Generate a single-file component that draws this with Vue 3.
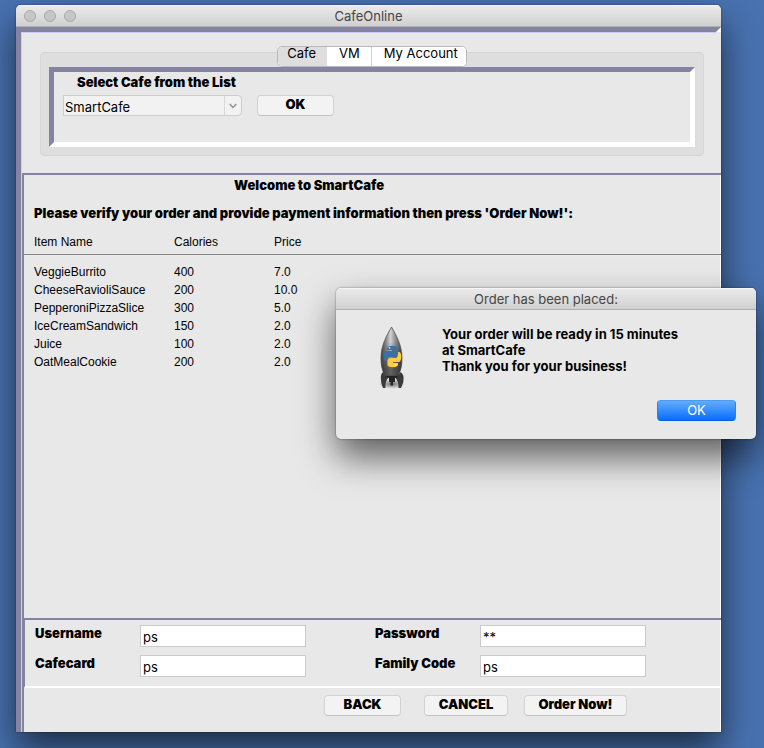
<script setup>
import { ref } from 'vue'

const cafe = ref('SmartCafe')
const tabs = ['Cafe', 'VM', 'My Account']
const activeTab = ref('Cafe')

const items = [
  { name: 'VeggieBurrito', calories: '400', price: '7.0' },
  { name: 'CheeseRavioliSauce', calories: '200', price: '10.0' },
  { name: 'PepperoniPizzaSlice', calories: '300', price: '5.0' },
  { name: 'IceCreamSandwich', calories: '150', price: '2.0' },
  { name: 'Juice', calories: '100', price: '2.0' },
  { name: 'OatMealCookie', calories: '200', price: '2.0' }
]

const fields = ref([
  { id: 'username', label: 'Username', value: 'ps' },
  { id: 'password', label: 'Password', value: '**' },
  { id: 'cafecard', label: 'Cafecard', value: 'ps' },
  { id: 'family', label: 'Family Code', value: 'ps' }
])
</script>

<template>
  <div class="desktop">
    <main class="window">
      <header class="titlebar">
        <div class="lights"><i></i><i></i><i></i></div>
        <span>CafeOnline</span>
      </header>

      <div class="frame">
        <div class="content">
          <section class="chooser">
            <nav class="tabs">
              <button
                v-for="tab in tabs"
                :key="tab"
                type="button"
                class="tab"
                :class="{ active: tab === activeTab }"
                @click="activeTab = tab"
              >{{ tab }}</button>
            </nav>
            <div class="group">
              <div class="sunken">
                <label class="strong list-label" for="cafe">Select Cafe from the List</label>
                <div class="pick">
                  <div class="combo">
                    <select id="cafe" v-model="cafe">
                      <option>SmartCafe</option>
                    </select>
                    <svg class="chevron" viewBox="0 0 17 19" width="17" height="19" aria-hidden="true">
                      <path d="M5 8 L8.5 11.5 L12 8" fill="none" stroke="#8e8e8e" stroke-width="1.5" />
                    </svg>
                  </div>
                  <button type="button" class="btn ok">OK</button>
                </div>
              </div>
            </div>
          </section>

          <div class="lower">
            <section class="order">
              <h1 class="strong">Welcome to SmartCafe</h1>
              <p class="strong">Please verify your order and provide payment information then press 'Order Now!':</p>
              <table>
                <thead>
                  <tr><th class="name">Item Name</th><th class="cal">Calories</th><th>Price</th></tr>
                </thead>
                <tbody>
                  <tr v-for="item in items" :key="item.name">
                    <td>{{ item.name }}</td>
                    <td>{{ item.calories }}</td>
                    <td>{{ item.price }}</td>
                  </tr>
                </tbody>
              </table>
            </section>

            <form class="payment" @submit.prevent>
              <div v-for="f in fields" :key="f.id" class="field">
                <label class="strong" :for="f.id">{{ f.label }}</label>
                <input :id="f.id" v-model="f.value" type="text" autocomplete="off" />
              </div>
            </form>

            <footer class="actions">
              <button type="button" class="btn back">BACK</button>
              <button type="button" class="btn cancel">CANCEL</button>
              <button type="button" class="btn order-now">Order Now!</button>
            </footer>
          </div>
        </div>
      </div>
    </main>

    <div class="dialog" role="dialog" aria-labelledby="dialog-title">
      <header id="dialog-title" class="titlebar">Order has been placed:</header>
      <div class="dialog-body">
        <svg class="rocket" viewBox="0 0 28 64" width="28" height="64" aria-hidden="true">
          <defs>
            <linearGradient id="hull" x1="0" x2="1" y1="0" y2="0">
              <stop offset="0" stop-color="#4c4c4c" />
              <stop offset="0.22" stop-color="#858585" />
              <stop offset="0.45" stop-color="#d2d2d2" />
              <stop offset="0.7" stop-color="#8a8a8a" />
              <stop offset="1" stop-color="#484848" />
            </linearGradient>
            <linearGradient id="shade" x1="0" x2="0" y1="0" y2="1">
              <stop offset="0.3" stop-color="#333" stop-opacity="0" />
              <stop offset="0.85" stop-color="#333" stop-opacity="0.7" />
            </linearGradient>
            <radialGradient id="ground">
              <stop offset="0" stop-color="#555" stop-opacity="0.9" />
              <stop offset="1" stop-color="#777" stop-opacity="0" />
            </radialGradient>
          </defs>
          <ellipse cx="14" cy="57" rx="13" ry="5" fill="url(#ground)" />
          <path d="M13.500 0 C9 8 3 18 3 31 C3 38 4 43 7 49 H20 C23 43 24 38 24 31 C24 18 18 8 13.500 0Z" fill="url(#hull)" stroke="#555" stroke-width="0.800" />
          <path d="M13.500 0 C9 8 3 18 3 31 C3 38 4 43 7 49 H20 C23 43 24 38 24 31 C24 18 18 8 13.500 0Z" fill="url(#shade)" />
          <path d="M5 45 C3 47 2.500 49 3 53 C3 56 4 58 5 61 H7.500 C7.500 56 8 53 11 50 L7 48.500Z" fill="#3a3a3a" />
          <path d="M22.500 45 C25 47 26 49 25.500 53 C25.500 56 24 58 23 61 H20.500 C20.500 56 19.500 53 16.500 50 L20 48.500Z" fill="#3a3a3a" />
          <path d="M7 49 H20.500 L17 51 V55 H15 V58.500 H12.500 V55 H11 V51Z" fill="#232323" />
          <path d="M9 23 V21.500 C9 18 18 18 19 21 V27 C19 29 17.500 30 16 30 H11.500 C9 30 8.500 31 8.500 34 H7.500 C4.500 33 4.500 24 7.500 24 H14 V23Z" fill="#3a70a6" />
          <circle cx="11.500" cy="20.800" r="0.900" fill="#e9f0f7" />
          <path d="M20 25 H21.500 C24 26 24 34.500 21 35 H15 V36 H20 V38 C19 41 10.500 41 9.500 38 V34 C9.500 32 11 31 13 31 H17 C19.500 31 20 29 20 25Z" fill="#fbcf3b" />
          <circle cx="17.500" cy="38" r="0.900" fill="#fff8dc" />
        </svg>
        <p>Your order will be ready in 15 minutes<br />at SmartCafe<br />Thank you for your business!</p>
      </div>
      <div class="dialog-actions">
        <button type="button" class="primary">OK</button>
      </div>
    </div>
  </div>
</template>

<style>
body {
  margin: 0;
}
</style>

<style scoped>
* {
  box-sizing: border-box;
}

.desktop {
  position: relative;
  display: flex;
  min-height: 100vh;
  padding: 5px 43px 16px 16px;
  overflow: hidden;
  background: #4872b0;
  color: #000;
  font: 13px/16px Inter, "Liberation Sans", sans-serif;
}

button,
input,
select {
  font: inherit;
  color: inherit;
  margin: 0;
}

.strong {
  font: 900 13px/16px Inter, "Liberation Sans", sans-serif;
}

.window {
  flex: 1;
  display: flex;
  flex-direction: column;
  min-width: 0;
  overflow: hidden;
  border-radius: 5px 5px 0 0;
  background: #e8e8e8;
  box-shadow: 0 0 2px rgba(0, 0, 0, 0.5), 0 18px 36px rgba(0, 0, 0, 0.6);
}

.titlebar {
  position: relative;
  display: flex;
  align-items: center;
  justify-content: center;
  height: 22px;
  border-bottom: 1px solid #aeaeae;
  background: linear-gradient(#ebebeb, #d0d0d0);
  box-shadow: inset 0 1px #f6f6f6;
  color: #454545;
}

.lights {
  position: absolute;
  left: 8px;
  display: flex;
  gap: 8px;
}

.lights i {
  width: 12px;
  height: 12px;
  border: 1px solid #a8a8a8;
  border-radius: 50%;
  background: #c6c6c6;
}

.frame {
  flex: 1;
  display: flex;
  margin: 0 0 -5px;
  border: 5px solid;
  border-color: #8484a2 #fff #fff #8484a2;
}

.content {
  flex: 1;
  display: flex;
  flex-direction: column;
  min-width: 0;
  margin: 0 -5px 0 0;
  border-left: 1px solid #ccccfa;
  background: linear-gradient(#ccccfa, #ccccfa) 0 0 / calc(100% - 5px) 1px no-repeat #e8e8e8;
}

.chooser {
  display: flex;
  flex-direction: column;
  padding: 14px 17px 17px 18px;
}

.tabs {
  z-index: 1;
  display: flex;
  align-self: center;
  margin-bottom: -15px;
  height: 21px;
  overflow: hidden;
  border: 1px solid #b9b9b9;
  border-radius: 5px;
  background: #fff;
}

.tab {
  padding: 0 11px 7px 12px;
  border: 0;
  border-right: 1px solid #d2d2d2;
  background: #fff;
  line-height: 12px;
}

.tab:last-child {
  padding-right: 8px;
  border-right: 0;
}

.tab.active {
  background: #dedede;
  border-color: #dedede;
  padding-left: 9px;
  padding-right: 10px;
}

.group {
  padding: 14px 8px 8px;
  border: 1px solid #d5d5d5;
  border-radius: 4px;
  background: #dedede;
}

.sunken {
  height: 80px;
  padding: 2px 9px;
  border: 5px solid;
  border-color: #8484a2 #fff #fff #8484a2;
  background: #e8e8e8;
}

.list-label {
  display: block;
  margin-left: 14px;
}

.pick {
  display: flex;
  align-items: center;
  gap: 15px;
  margin-top: 5px;
}

.combo {
  display: grid;
  width: 179px;
  height: 21px;
  border: 1px solid #cdcdcd;
  border-radius: 0 4px 4px 0;
  overflow: hidden;
  background: #f2f2f2;
}

.combo select,
.chevron {
  grid-area: 1 / 1;
}

.combo select {
  appearance: none;
  width: 100%;
  height: 19px;
  padding: 2px 18px 0 1px;
  border: 0;
  background: transparent;
  line-height: 16px;
}

.chevron {
  justify-self: end;
  border-left: 1px solid #d8d8d8;
  pointer-events: none;
}

.btn {
  height: 21px;
  padding: 0 0 3px;
  border: 1px solid #d2d2d2;
  border-bottom-color: #c2c2c2;
  border-radius: 4px;
  background: #f3f3f3;
  font: 900 13px/16px Inter, "Liberation Sans", sans-serif;
}

.btn.ok,
.btn.back {
  width: 77px;
}

.btn.cancel {
  width: 84px;
}

.btn.order-now {
  width: 103px;
}

.lower {
  flex: 1;
  display: flex;
  flex-direction: column;
  border: solid #8484a2;
  border-width: 2px 0 0 2px;
  box-shadow: inset -1px 0 #fff;
}

.order {
  flex: 1;
  padding: 2px 0 0;
}

.order h1 {
  margin: 0 0 12px 210px;
}

.order p {
  margin: 0 0 12px 10px;
}

table {
  width: 100%;
  border-collapse: collapse;
  font: 12px/18px "Liberation Sans", Arial, sans-serif;
}

th,
td {
  padding: 0;
  text-align: left;
  font-weight: 400;
}

th:first-child,
td:first-child {
  padding-left: 10px;
}

.name {
  width: 150px;
}

.cal {
  width: 100px;
}

th {
  height: 21px;
  vertical-align: top;
  border-bottom: 1px solid #858585;
}

tbody::before {
  content: "";
  display: block;
  height: 8px;
}

.payment {
  display: grid;
  grid-template-columns: 340px 1fr;
  row-gap: 8px;
  padding: 5px 0 9px 10px;
  border: solid #8484a2;
  border-width: 2px 0 2px 1px;
  border-bottom-color: #fff;
}

.field {
  display: grid;
  grid-template-columns: 105px 166px;
}

.field input {
  width: 100%;
  height: 22px;
  padding: 2px 2px 0;
  border: 1px solid #cbcbcb;
  background: #fff;
}

.actions {
  display: flex;
  padding: 7px 0 16px 300px;
}

.btn.cancel {
  margin-left: 23px;
}

.btn.order-now {
  margin-left: 16px;
}

.dialog {
  position: absolute;
  top: 288px;
  right: 8px;
  z-index: 2;
  width: 420px;
  overflow: hidden;
  border-radius: 5px;
  background: #e8e8e8;
  box-shadow: 0 0 2px rgba(0, 0, 0, 0.5), 0 18px 36px rgba(0, 0, 0, 0.6);
}

.dialog-body {
  display: flex;
  gap: 36px;
  padding: 16px 20px 0 42px;
}

.rocket {
  margin-top: 1px;
}

.dialog-body p {
  margin: 0;
  font-weight: 700;
}

.dialog-actions {
  display: flex;
  justify-content: flex-end;
  padding: 9px 20px 18px;
}

.primary {
  width: 79px;
  height: 21px;
  padding: 0 0 1px;
  border: 1px solid;
  border-color: #4a9bf8 #2a81f3 #0a5be8;
  border-radius: 4px;
  background: linear-gradient(#62adfa, #0a6dff);
  color: #fff;
}
</style>
